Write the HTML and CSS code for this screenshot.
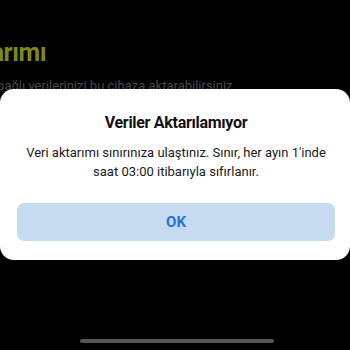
FILE: index.html
```html
<!DOCTYPE html>
<html lang="tr">
<head>
  <meta charset="UTF-8">
  <meta name="viewport" content="width=device-width, initial-scale=1.0">
  <title>Veri aktarımı</title>
  <link rel="stylesheet" href="styles.css">
</head>
<body>

<div class="screen">
  <div class="page">
    <div class="page-line title-line">
      <h1 class="page-title">Veri aktarımı</h1>
    </div>
    <div class="page-line sub-line">
      <p class="page-sub">Hesabınıza bağlı verilerinizi bu cihaza aktarabilirsiniz.</p>
    </div>
  </div>

  <div class="dialog">
    <h2 class="dialog-title">Veriler Aktarılamıyor</h2>
    <p class="dialog-text">Veri aktarımı sınırınıza ulaştınız. Sınır, her ayın 1'inde saat 03:00 itibarıyla sıfırlanır.</p>
    <button class="dialog-btn">OK</button>
  </div>

  <div class="home-bar"></div>
</div>

</body>
</html>
```

FILE: styles.css
```css
body {
  margin: 0;
  background: #000;
  font-family: Roboto, "Noto Sans", "Liberation Sans", sans-serif;
}

.screen {
  position: relative;
  width: 350px;
  height: 350px;
  overflow: hidden;
}

.page {
  padding-top: 37px;
}

/* the page behind is scrolled sideways, so the lines end at a fixed x */
.page-line {
  display: flex;
  justify-content: flex-end;
  white-space: nowrap;
}

.title-line {
  width: 46px;
}

.sub-line {
  width: 236px;
}

.page-title {
  margin: 0;
  font-size: 25px;
  font-weight: 700;
  letter-spacing: -0.5px;
  color: #7b8a17;
  line-height: 32px;
}

.page-sub {
  margin: 9px 0 0;
  font-size: 13px;
  color: #4a4a4a;
}

.dialog {
  position: absolute;
  top: 89px;
  left: 0;
  width: 350px;
  height: 171px;
  box-sizing: border-box;
  background: #fff;
  border-radius: 14px;
  padding: 23px 15px 0 17px;
  text-align: center;
}

.dialog-title {
  margin: 0;
  font-size: 16px;
  font-weight: 700;
  letter-spacing: -0.3px;
  color: #111;
  line-height: 22px;
}

.dialog-text {
  margin: 9px 0 0;
  font-size: 13px;
  line-height: 19px;
  color: #1a1a1a;
}

.dialog-btn {
  display: block;
  width: 318px;
  height: 38px;
  margin-top: 22px;
  border: none;
  border-radius: 7px;
  background: #c5dbf0;
  color: #2a72d8;
  font-family: inherit;
  font-size: 15px;
  font-weight: 700;
  cursor: pointer;
}

.home-bar {
  position: absolute;
  left: 80px;
  top: 339px;
  width: 194px;
  height: 4px;
  border-radius: 2px;
  background: #555;
}
```
